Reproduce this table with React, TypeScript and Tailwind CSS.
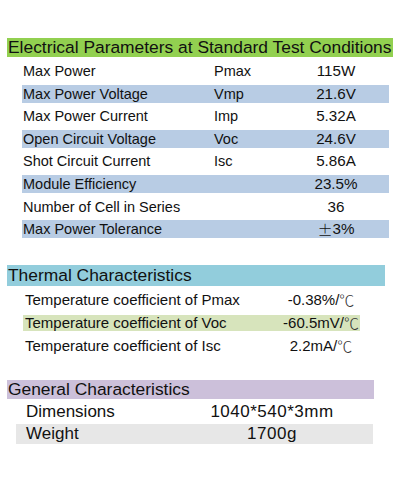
import React from 'react';

const cjk = { fontFamily: '"Noto Sans CJK JP", "Noto Sans CJK SC", sans-serif' };

function Celsius({ value }: { value: string }) {
  // the degree sign in the source is a full-width CJK glyph
  const base = value.replace('℃', '');
  return (
    <>
      {base}
      <span className="font-light text-[#333]" style={cjk}>
        ℃
      </span>
    </>
  );
}

const electrical = [
  { label: 'Max Power', symbol: 'Pmax', value: '115W', shaded: false },
  { label: 'Max Power Voltage', symbol: 'Vmp', value: '21.6V', shaded: true },
  { label: 'Max Power Current', symbol: 'Imp', value: '5.32A', shaded: false },
  { label: 'Open Circuit Voltage', symbol: 'Voc', value: '24.6V', shaded: true },
  { label: 'Shot Circuit Current', symbol: 'Isc', value: '5.86A', shaded: false },
  { label: 'Module Efficiency', symbol: '', value: '23.5%', shaded: true },
  { label: 'Number of Cell in Series', symbol: '', value: '36', shaded: false },
  { label: 'Max Power Tolerance', symbol: '', value: '±3%', shaded: true },
];

const thermal = [
  { label: 'Temperature coefficient of Pmax', value: '-0.38%/℃', shaded: false },
  { label: 'Temperature coefficient of Voc', value: '-60.5mV/℃', shaded: true },
  { label: 'Temperature coefficient of Isc', value: '2.2mA/℃', shaded: false },
];

const general = [
  { label: 'Dimensions', value: '1040*540*3mm', shaded: false },
  { label: 'Weight', value: '1700g', shaded: true },
];

export default function App() {
  return (
    <div
      className="w-[400px] h-[500px] bg-white pt-[38px] text-[#111]"
      style={{ fontFamily: '"Liberation Sans", Arial, "Noto Sans CJK SC", sans-serif' }}
    >
      {/* Electrical */}
      <div className="ml-[7px] w-[386px] h-[19px] bg-[#92d050] pl-[1px] text-[17.4px] leading-[19px] whitespace-nowrap">
        Electrical Parameters at Standard Test Conditions
      </div>
      <div className="ml-[22px] mt-[5px] w-[367px] flex flex-col gap-[4.6px]">
        {electrical.map((row) => (
          <div
            key={row.label}
            className={`h-[18px] grid grid-cols-[192px_82px_80px] items-center text-[14.5px] leading-[18px] whitespace-nowrap ${
              row.shaded ? 'bg-[#b8cce4]' : ''
            }`}
          >
            <span className="pl-[1px]">{row.label}</span>
            <span>{row.symbol}</span>
            <span className="flex justify-center text-[15.2px]">
              {row.value.startsWith('±') ? (
                <>
                  <span className="inline-block w-[15px] text-center font-light" style={cjk}>
                    ±
                  </span>
                  {row.value.slice(1)}
                </>
              ) : (
                row.value
              )}
            </span>
          </div>
        ))}
      </div>

      {/* Thermal */}
      <div className="ml-[7px] mt-[27px] w-[378px] h-[21px] bg-[#92cddc] pl-[1px] text-[17.4px] leading-[21px]">
        Thermal Characteristics
      </div>
      <div className="ml-[23px] mt-[6px] w-[337px] flex flex-col gap-[7px]">
        {thermal.map((row) => (
          <div
            key={row.label}
            className={`h-[16px] grid grid-cols-[258px_80px] items-center text-[15px] leading-[16px] whitespace-nowrap ${
              row.shaded ? 'bg-[#d7e4bc]' : ''
            }`}
          >
            <span className="pl-[2px]">{row.label}</span>
            <span className="flex justify-center">
              <Celsius value={row.value} />
            </span>
          </div>
        ))}
      </div>

      {/* General */}
      <div className="ml-[7px] mt-[26px] w-[367px] h-[19px] bg-[#ccc0da] pl-[1px] text-[17.4px] leading-[19px]">
        General Characteristics
      </div>
      <div className="ml-[16px] mt-[3px] w-[357px] flex flex-col gap-[2px]">
        {general.map((row) => (
          <div
            key={row.label}
            className={`h-[20px] grid grid-cols-[190px_132px] items-center text-[17px] leading-[20px] whitespace-nowrap ${
              row.shaded ? 'bg-[#e7e7e7]' : ''
            }`}
          >
            <span className="pl-[10px]">{row.label}</span>
            <span className="flex justify-center tracking-[0.5px]">{row.value}</span>
          </div>
        ))}
      </div>
    </div>
  );
}
